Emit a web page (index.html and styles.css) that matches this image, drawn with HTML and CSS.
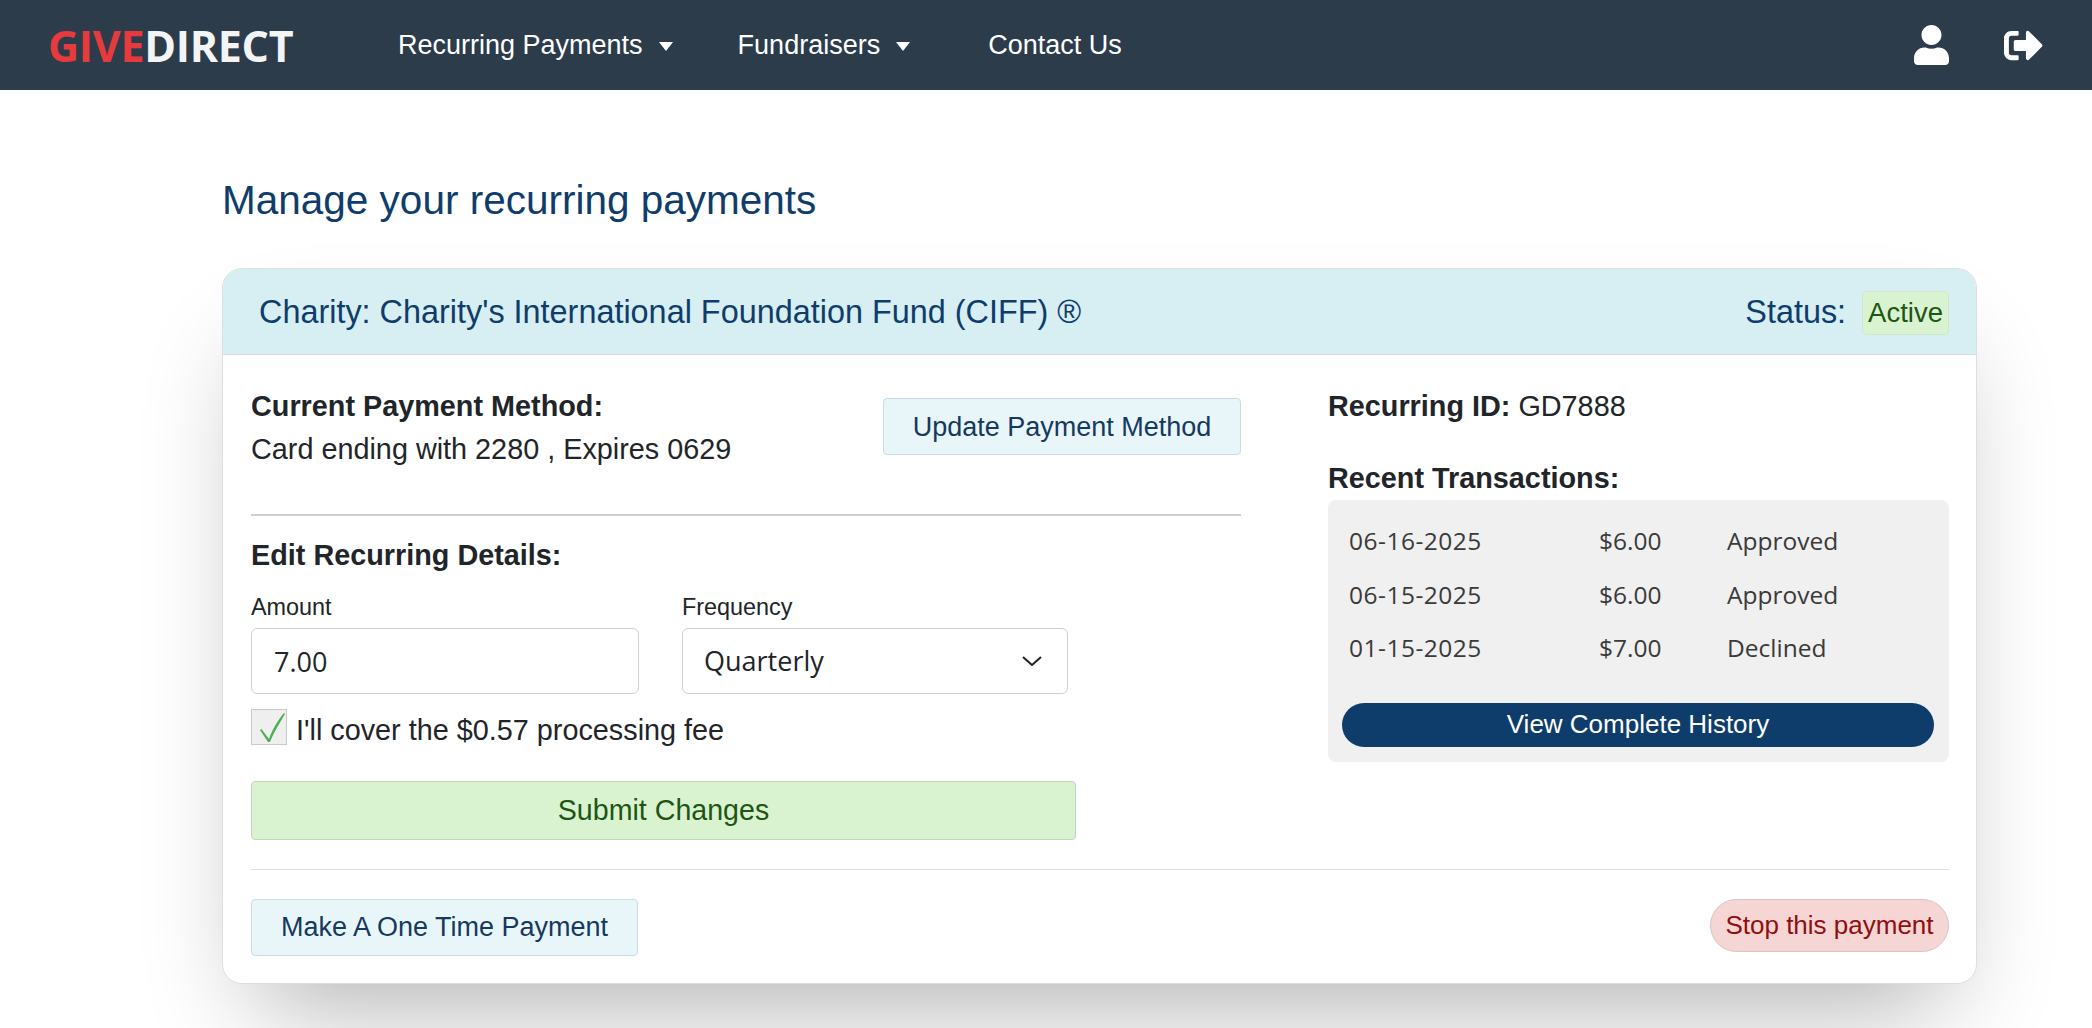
FILE: index.html
```html
<!DOCTYPE html>
<html lang="en">
<head>
<meta charset="utf-8">
<title>Manage your recurring payments</title>
<link rel="stylesheet" href="styles.css">
</head>
<body>
<header class="navbar">
  <div class="logo"><span class="logo-red">GIVE</span><span class="logo-white">DIRECT</span></div>
  <nav class="nav-links">
    <a class="nav-link nav-recurring">Recurring Payments<i class="caret"></i></a>
    <a class="nav-link nav-fund">Fundraisers<i class="caret"></i></a>
    <a class="nav-link">Contact Us</a>
  </nav>
  <div class="nav-icons">
    <svg class="icon-user" viewBox="0 0 448 512"><path fill="#fff" d="M224 256c70.7 0 128-57.3 128-128S294.7 0 224 0 96 57.3 96 128s57.3 128 128 128zm89.6 32h-16.7c-22.2 10.2-46.9 16-72.9 16s-50.6-5.8-72.9-16h-16.7C60.2 288 0 348.2 0 422.4V464c0 26.5 21.5 48 48 48h352c26.5 0 48-21.5 48-48v-41.6c0-74.2-60.2-134.4-134.4-134.4z"/></svg>
    <svg class="icon-out" viewBox="0 0 512 512"><path fill="#fff" d="M497 273L329 441c-15 15-41 4.5-41-17v-96H152c-13.3 0-24-10.7-24-24v-96c0-13.3 10.7-24 24-24h136V88c0-21.4 25.9-32 41-17l168 168c9.3 9.4 9.3 24.6 0 34zM192 436v-40c0-6.6-5.4-12-12-12H96c-17.7 0-32-14.3-32-32V160c0-17.7 14.3-32 32-32h84c6.6 0 12-5.4 12-12V76c0-6.6-5.4-12-12-12H96c-53 0-96 43-96 96v192c0 53 43 96 96 96h84c6.6 0 12-5.4 12-12z"/></svg>
  </div>
</header>

<main class="page">
  <h1 class="title">Manage your recurring payments</h1>
  <section class="card">
    <div class="card-head">
      <div class="charity">Charity: Charity's International Foundation Fund (CIFF) ®</div>
      <div class="status"><span>Status:</span><span class="badge">Active</span></div>
    </div>
    <div class="card-body">
      <div class="columns">
        <div class="col-left">
          <div class="method-row">
            <div class="method">
              <div class="strong">Current Payment Method:</div>
              <div class="method-text">Card ending with 2280 , Expires 0629</div>
            </div>
            <button class="btn-light btn-update" type="button">Update Payment Method</button>
          </div>
          <hr class="rule">
          <div class="strong edit-title">Edit Recurring Details:</div>
          <div class="fields">
            <div class="field field-amount">
              <label class="field-label">Amount</label>
              <input class="control" type="text" value="7.00">
            </div>
            <div class="field field-freq">
              <label class="field-label">Frequency</label>
              <div class="select-wrap">
                <div class="control select-control">Quarterly</div>
                <svg class="chevron" viewBox="0 0 20 10"><path d="M1 1l9 8 9-8" fill="none" stroke="#222" stroke-width="2"/></svg>
              </div>
            </div>
          </div>
          <div class="fee">
            <span class="checkbox"><svg viewBox="0 0 34 34"><path fill="#4caf50" d="M8 20l1.500-1 7.500 10C20 20 26 10 32 3l1 1C27 14 21 24 18 32h-2z"/></svg></span>
            <span class="fee-text">I'll cover the $0.57 processing fee</span>
          </div>
          <button class="btn-submit" type="button">Submit Changes</button>
        </div>
        <div class="col-right">
          <div class="rec-id"><span class="strong">Recurring ID:</span> GD7888</div>
          <div class="strong recent-title">Recent Transactions:</div>
          <div class="tx-box">
            <div class="tx-row"><span class="tx-date">06-16-2025</span><span>$6.00</span><span>Approved</span></div>
            <div class="tx-row"><span class="tx-date">06-15-2025</span><span>$6.00</span><span>Approved</span></div>
            <div class="tx-row"><span class="tx-date">01-15-2025</span><span>$7.00</span><span>Declined</span></div>
            <button class="btn-history" type="button">View Complete History</button>
          </div>
        </div>
      </div>
      <div class="card-foot">
        <button class="btn-light btn-once" type="button">Make A One Time Payment</button>
        <button class="btn-stop" type="button">Stop this payment</button>
      </div>
    </div>
  </section>
</main>
</body>
</html>
```

FILE: styles.css
```css
* { box-sizing: border-box; }
html, body { margin: 0; padding: 0; }
body {
  font-family: "Liberation Sans", Arial, sans-serif;
  color: #212529;
  background: #fff;
  font-size: 28.8px;
  overflow-x: hidden;
}
button { font-family: inherit; cursor: pointer; }

.navbar {
  height: 90px;
  background: #2c3c4b;
  display: flex;
  align-items: center;
  padding: 0 49px 0 48px;
}
.logo {
  font-family: "Open Sans", sans-serif;
  font-weight: 700;
  font-size: 43px;
  letter-spacing: -.3px;
  width: 350px;
}
.logo-red { color: #e63a3d; }
.logo-white { color: #f3f4f5; }
.nav-links { display: flex; align-items: center; flex: 1; }
.nav-link { color: #fff; font-size: 27px; display: flex; align-items: center; }
.nav-recurring { margin-right: 65px; }
.nav-fund { margin-right: 78px; }
.caret {
  display: block;
  width: 0;
  height: 0;
  margin-left: 16px;
  margin-top: 3px;
  border-top: 9px solid #fff;
  border-left: 7.5px solid transparent;
  border-right: 7.5px solid transparent;
}
.nav-icons { display: flex; align-items: center; gap: 55px; }
.icon-user { width: 35px; height: 40px; display: block; }
.icon-out { width: 39px; height: 39px; display: block; }

.page { padding: 84px 115px 44px 222px; }
.title {
  margin: 0 0 42px;
  font-size: 40.5px;
  line-height: 52px;
  font-weight: 400;
  color: #0f3d6b;
}
.card {
  background: #fff;
  border: 1px solid #dcdfe1;
  border-radius: 20px;
  box-shadow: 0 55px 100px -34px rgba(0, 0, 0, .31);
  overflow: hidden;
  height: 716px;
}
.card-head {
  height: 86px;
  background: #d7eef3;
  border-bottom: 1px solid #d8e0e3;
  display: flex;
  align-items: center;
  justify-content: space-between;
  padding: 1px 27px 0 36px;
  color: #0f3d6b;
  font-size: 32.4px;
}
.status { display: flex; align-items: center; gap: 16px; }
.badge {
  background: #d9f3d1;
  border: 1px solid #cfe8cb;
  border-radius: 5px;
  color: #1f5514;
  font-size: 27.5px;
  height: 44px;
  margin-top: 1px;
  padding: 0 5px;
  display: flex;
  align-items: center;
}
.card-body { padding: 0 27px 0 28px; }
.columns { display: flex; height: 514px; }
.col-left { width: 990px; }
.col-right { width: 621px; margin-left: 87px; }
.strong { font-weight: 700; }
.method-row {
  display: flex;
  justify-content: space-between;
  padding-top: 30px;
  height: 159px;
}
.method { line-height: 43px; }
.btn-light {
  background: #e9f6f9;
  border: 1px solid #c8dce2;
  border-radius: 4px;
  color: #15395f;
  font-size: 27px;
  height: 57px;
  padding: 0;
}
.btn-update { width: 358px; margin-top: 13px; padding-top: 2px; }
.rule { margin: 0; border: 0; border-top: 2px solid #cfcfcf; }
.edit-title { margin-top: 21px; line-height: 36px; }
.fields { display: flex; margin-top: 19px; }
.field-amount { width: 388px; margin-right: 43px; }
.field-freq { width: 386px; }
.field-label { display: block; font-size: 23.4px; line-height: 30px; margin-bottom: 6px; color: #212529; }
.control {
  display: block;
  width: 100%;
  height: 66px;
  border: 1px solid #ced0d3;
  border-radius: 6px;
  background: #fff;
  font-family: "Open Sans", sans-serif;
  font-size: 27px;
  color: #212529;
  padding: 0 22px;
  line-height: 64px;
  outline: none;
}
.select-control { padding-left: 21px; }
.select-wrap { position: relative; }
.chevron { position: absolute; right: 26px; top: 28px; width: 20px; height: 10px; }
.fee { display: flex; align-items: center; margin-top: 15px; gap: 9px; height: 36px; }
.fee-text { position: relative; top: 3px; }
.checkbox {
  width: 36px;
  height: 36px;
  background: #efefef;
  border: 1px solid #c9c9c9;
  display: block;
}
.checkbox svg { display: block; width: 34px; height: 34px; }
.btn-submit {
  display: block;
  width: 825px;
  height: 59px;
  margin-top: 36px;
  background: #d9f3d1;
  border: 1px solid #c4d6c0;
  border-radius: 4px;
  color: #1f5514;
  font-size: 28.6px;
}
.rec-id { padding-top: 30px; line-height: 42px; }
.recent-title { margin-top: 30px; margin-bottom: 1px; line-height: 42px; }
.tx-box {
  background: #f0f0f0;
  border-radius: 8px;
  height: 262px;
  padding: 14px 15px 0 14px;
}
.tx-row {
  display: grid;
  grid-template-columns: 250px 128px 1fr;
  padding-left: 7px;
  font-family: "Open Sans", sans-serif;
  font-size: 24.5px;
  line-height: 53.5px;
  color: #3a3a3a;
}
.tx-date { letter-spacing: .5px; }
.btn-history {
  display: block;
  width: 592px;
  height: 44px;
  margin-top: 28px;
  background: #0f3d6b;
  border: 0;
  border-radius: 22px;
  color: #fff;
  font-size: 26px;
}
.card-foot {
  border-top: 1px solid #dedede;
  display: flex;
  justify-content: space-between;
  align-items: flex-start;
  padding-top: 29px;
}
.btn-once { width: 387px; }
.btn-stop {
  width: 239px;
  height: 53px;
  background: #f6d5d5;
  border: 1px solid #d8c4c4;
  border-radius: 27px;
  color: #8f0f0f;
  font-size: 26px;
  padding: 0;
}
```
